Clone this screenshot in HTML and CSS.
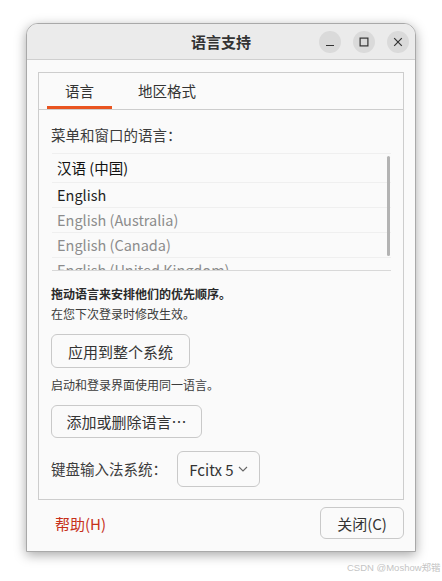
FILE: index.html
```html
<!DOCTYPE html>
<html>
<head>
    <title>语言支持</title>
    <link rel="stylesheet" href="styles.css">
</head>
<body>
    <div class="window">
        <div class="titlebar">
            <span class="title">语言支持</span>
            <div class="controls">
                <span class="ctl">
                    <svg width="10" height="10" viewBox="0 0 10 10"><path d="M1 8.5h8" stroke="#333" stroke-width="1.2"/></svg>
                </span>
                <span class="ctl">
                    <svg width="10" height="10" viewBox="0 0 10 10"><rect x="1.1" y="1.1" width="7.8" height="7.8" fill="none" stroke="#333" stroke-width="1.2"/></svg>
                </span>
                <span class="ctl">
                    <svg width="10" height="10" viewBox="0 0 10 10"><path d="M1.2 1.2l7.6 7.6M8.8 1.2l-7.6 7.6" stroke="#333" stroke-width="1.2"/></svg>
                </span>
            </div>
        </div>

        <div class="body">
            <div class="notebook">
                <div class="tabs">
                    <span class="tab active">语言</span>
                    <span class="tab">地区格式</span>
                </div>

                <div class="page">
                    <div class="label">菜单和窗口的语言：</div>

                    <div class="langlist">
                        <div class="row first">汉语 (中国)</div>
                        <div class="row dark">English</div>
                        <div class="row">English (Australia)</div>
                        <div class="row">English (Canada)</div>
                        <div class="row">English (United Kingdom)</div>
                        <div class="scrollbar"></div>
                    </div>

                    <div class="hint">
                        <div class="strong">拖动语言来安排他们的优先顺序。</div>
                        <div>在您下次登录时修改生效。</div>
                    </div>

                    <button class="btn apply">应用到整个系统</button>
                    <div class="note">启动和登录界面使用同一语言。</div>
                    <button class="btn add">添加或删除语言…</button>

                    <div class="im-row">
                        <span class="label">键盘输入法系统：</span>
                        <span class="combo">Fcitx 5
                            <svg width="10" height="6" viewBox="0 0 10 6"><path d="M1 1l4 4 4-4" fill="none" stroke="#666" stroke-width="1.1"/></svg>
                        </span>
                    </div>
                </div>
            </div>

            <div class="footer">
                <span class="help">帮助(H)</span>
                <button class="btn close">关闭(C)</button>
            </div>
        </div>
    </div>
    <div class="watermark">CSDN @Moshow郑锴</div>
</body>
</html>
```

FILE: styles.css
```css
html,
body {
	height: 100%;
}

body {
	margin: 0;
	background: #fff;
	font-family: "Noto Sans CJK SC", sans-serif;
	color: #333;
	overflow: hidden;
}

.window {
	margin: 23px 0 0 26px;
	width: 390px;
	box-sizing: border-box;
	border: 1px solid #a9a9a9;
	border-radius: 12px 12px 0 0;
	background: #fafafa;
	box-shadow: 0 3px 12px rgba(0,0,0,0.35);
	overflow: hidden;
}

/* header bar */
.titlebar {
	height: 35px;
	background: #ebebeb;
	border-bottom: 1px solid #cfcfcf;
	display: flex;
	align-items: center;
	justify-content: center;
	position: relative;
}

.title {
	font-size: 15px;
	font-weight: bold;
	color: #333;
}

.controls {
	position: absolute;
	right: 6px;
	top: 7px;
	display: flex;
	gap: 12px;
}

.ctl {
	width: 22px;
	height: 22px;
	border-radius: 50%;
	background: #dadada;
	display: flex;
	align-items: center;
	justify-content: center;
}

.body {
	padding: 12px 11px 12px;
}

/* notebook with tabs */
.notebook {
	border: 1px solid #cdcdcd;
	background: #fafafa;
}

.tabs {
	display: flex;
	gap: 8px;
	padding-left: 8px;
	border-bottom: 1px solid #cdcdcd;
}

.tab {
	height: 36px;
	line-height: 36px;
	padding: 0 18px;
	font-size: 14.5px;
	color: #333;
	box-sizing: border-box;
}

.tab.active {
	box-shadow: inset 0 -3px 0 #e95420;
}

.page {
	padding: 15px 12px 12px;
}

.label {
	font-size: 14.5px;
	line-height: 20px;
	color: #3c3c3c;
}

.langlist {
	position: relative;
	margin: 8px 0 0 1px;
	height: 116px;
	overflow: hidden;
	border-top: 1px solid #efefef;
	border-bottom: 1px solid #d8d8d8;
}

.row {
	height: 24px;
	line-height: 24px;
	padding-left: 5px;
	font-size: 14.5px;
	color: #8c8c8c;
	border-bottom: 1px solid #efefef;
}

.row.first {
	height: 28px;
	line-height: 28px;
	color: #111;
}

.row.dark {
	color: #1e1e1e;
}

.scrollbar {
	position: absolute;
	right: 1px;
	top: 2px;
	width: 3px;
	height: 100px;
	border-radius: 2px;
	background: #b3b3b3;
}

.hint {
	margin-top: 13px;
	font-size: 12px;
	line-height: 20px;
	color: #3c3c3c;
}

.hint .strong {
	font-weight: bold;
	color: #2a2a2a;
}

.btn {
	display: block;
	font-family: inherit;
	font-size: 15px;
	color: #333;
	background: #fafafa;
	border: 1px solid #c9c9c9;
	border-radius: 6px;
	padding: 0;
}

.btn.apply {
	margin-top: 10px;
	width: 139px;
	height: 34px;
}

.note {
	margin-top: 7px;
	font-size: 12px;
	line-height: 20px;
	color: #3c3c3c;
}

.btn.add {
	margin-top: 10px;
	width: 151px;
	height: 33px;
}

.im-row {
	margin-top: 13px;
	display: flex;
	align-items: center;
	gap: 10px;
}

.combo {
	width: 83px;
	height: 36px;
	box-sizing: border-box;
	border: 1px solid #c9c9c9;
	border-radius: 6px;
	display: flex;
	align-items: center;
	justify-content: center;
	gap: 4px;
	font-size: 15px;
	color: #333;
}

/* bottom buttons */
.footer {
	margin-top: 7px;
	display: flex;
	justify-content: space-between;
	align-items: center;
}

.help {
	margin-left: 17px;
	font-size: 15px;
	color: #c7311a;
}

.btn.close {
	width: 84px;
	height: 32px;
}

.watermark {
	margin: 9px 0 0 347px;
	white-space: nowrap;
	font-size: 9.5px;
	line-height: 14px;
	color: #c4c4c4;
	font-family: "Liberation Sans", "Noto Sans CJK SC", sans-serif;
}
```
